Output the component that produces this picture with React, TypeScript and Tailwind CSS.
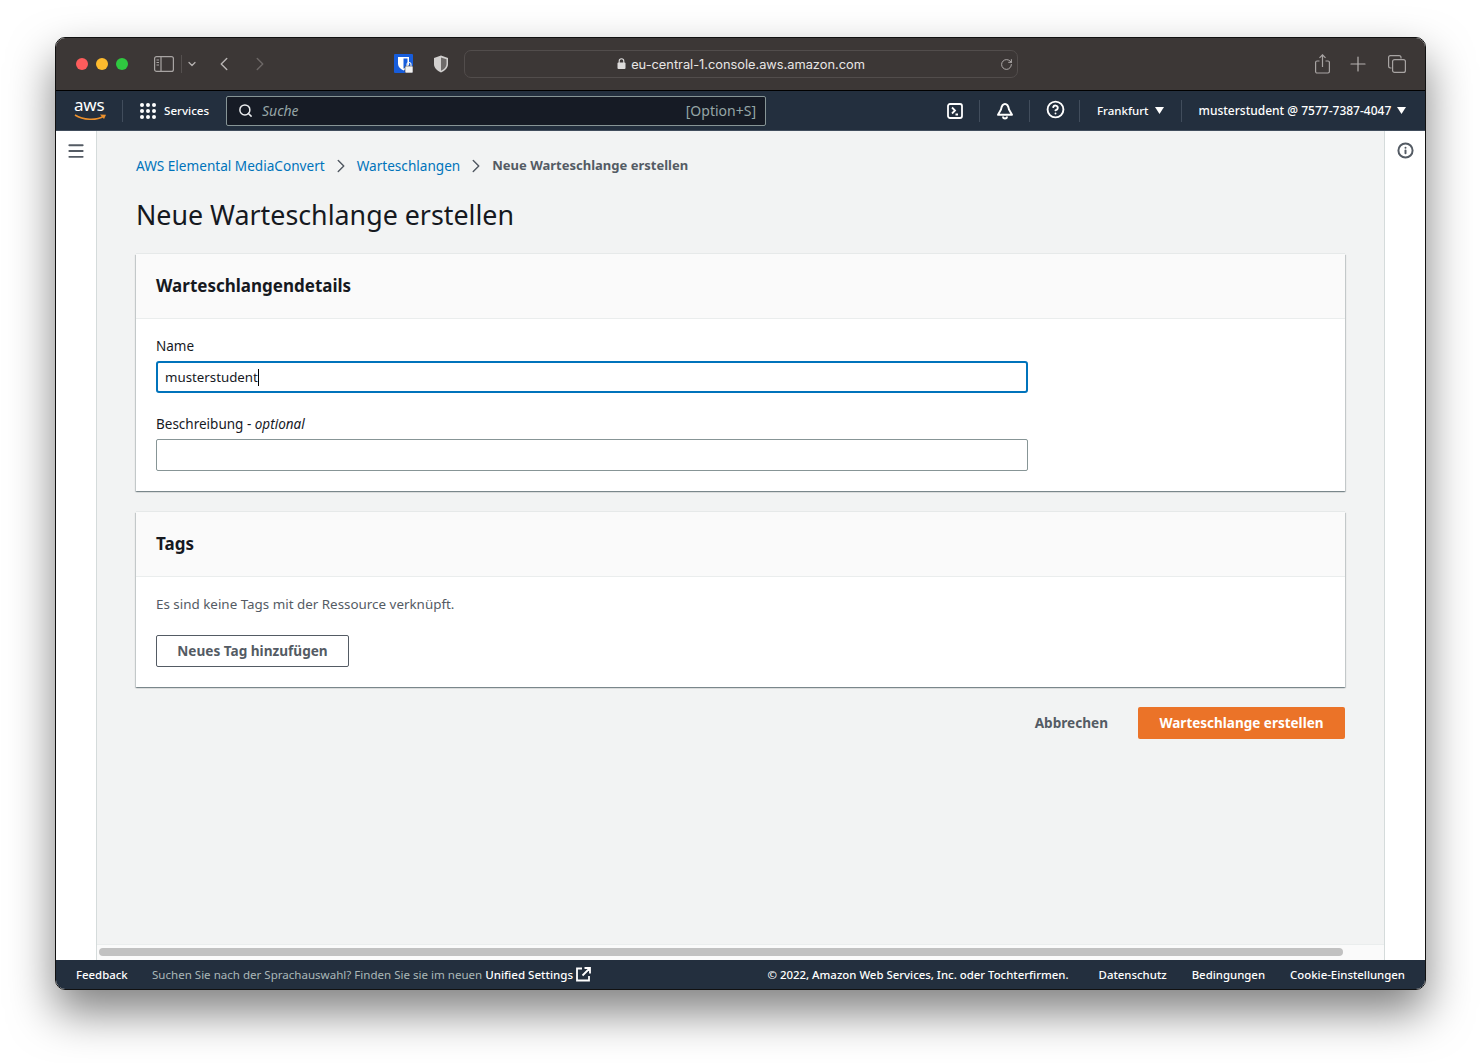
import { Menu, Plus, ChevronLeft, ChevronRight, ChevronDown, RotateCw, Search, HelpCircle, Info } from "lucide-react";

const font = "font-['Noto_Sans',sans-serif]";

function Caret() {
  return (
    <svg width="9" height="7" viewBox="0 0 9 7" className="ml-[6px]">
      <path d="M0 0h9L4.5 7z" fill="#fff" />
    </svg>
  );
}

function NavDivider() {
  return <div className="w-px h-[22px] bg-[#414d5c]" />;
}

function BrowserBar() {
  return (
    <div className="h-[53px] shrink-0 flex items-center bg-[#3c3736] border-b border-black text-[#b5b1b0] pb-px">
      <div className="flex gap-[8px] ml-[20px]">
        <div className="w-3 h-3 rounded-full bg-[#fd5c5c]" />
        <div className="w-3 h-3 rounded-full bg-[#febb2e]" />
        <div className="w-3 h-3 rounded-full bg-[#2fc840]" />
      </div>
      <svg width="20" height="16" viewBox="0 0 20 16" fill="none" stroke="#a8a4a3" strokeWidth="1.2" className="ml-[26px]">
        <rect x="0.6" y="0.6" width="18.8" height="14.8" rx="2" />
        <path d="M7 1v14M2.500 4h2.500M2.500 6.500h2.500M2.500 9h2.500" />
      </svg>
      <div className="w-px h-[18px] bg-[#55504f] ml-[7px]" />
      <ChevronDown size={12} strokeWidth={2.5} className="ml-[4px]" />
      <ChevronLeft size={22} strokeWidth={1.6} className="ml-[15px]" />
      <ChevronRight size={22} strokeWidth={1.6} className="ml-[14px] text-[#6b6665]" />
      <svg width="20" height="20" viewBox="0 0 20 20" className="ml-[123px]">
        <rect width="19" height="19" rx="1" fill="#175ddc" />
        <path d="M4 3h11v7c0 3-2.500 5-5.500 6.500C6.500 15 4 13 4 10z" fill="#fff" />
        <path d="M9.500 4.500h4v5.500c0 2-2 3.500-4 4.800z" fill="#175ddc" />
        <rect x="11" y="12" width="8" height="7" rx="1" fill="#f2f2f2" stroke="#3c3736" strokeWidth="0.6" />
        <path d="M13 12v-1.500a2 2 0 0 1 4 0V12" fill="none" stroke="#f2f2f2" strokeWidth="1.1" />
      </svg>
      <svg width="16" height="18" viewBox="0 0 16 18" className="ml-[19px]">
        <path d="M8 0.500 15 3v6c0 4-3 6.800-7 8.500C4 15.800 1 13 1 9V3z" fill="#d1cfce" />
        <path d="M8 2.500 13.500 4.300V9c0 3-2.300 5.300-5.500 6.700z" fill="#6e6a69" />
      </svg>
      <div className="relative ml-[15px] w-[554px] h-[28px] rounded-[7px] border border-[#524d4c] flex items-center justify-center">
        <svg width="9" height="11" viewBox="0 0 9 11" className="mr-[5px]">
          <rect x="0.5" y="4.500" width="8" height="6.500" rx="1" fill="#dedcdb" />
          <path d="M2.200 5V3a2.300 2.300 0 0 1 4.600 0v2" fill="none" stroke="#dedcdb" strokeWidth="1.1" />
        </svg>
        <span className="pt-[2px] text-[12.8px] text-[#e8e6e5] font-['Inter',sans-serif]">eu-central-1.console.aws.amazon.com</span>
        <RotateCw size={13} strokeWidth={1.5} className="absolute right-[4px] top-[7px] text-[#c5c2c1]" />
      </div>
      <svg width="15" height="20" viewBox="0 0 15 20" fill="none" stroke="#a8a4a3" strokeWidth="1.2" className="ml-[297px]">
        <path d="M4.500 7H2a1.400 1.400 0 0 0-1.400 1.400v9.200A1.400 1.400 0 0 0 2 19h11a1.400 1.400 0 0 0 1.400-1.400V8.400A1.400 1.400 0 0 0 13 7h-2.500" />
        <path d="M7.500 13V1M4.500 3.800 7.500 0.800l3 3" />
      </svg>
      <Plus size={24} strokeWidth={1.2} className="ml-[16px]" />
      <svg width="18" height="18" viewBox="0 0 18 18" fill="none" stroke="#a8a4a3" strokeWidth="1.2" className="ml-[18px]">
        <path d="M3.500 13H2.500A1.900 1.900 0 0 1 0.600 11.100V2.500A1.900 1.900 0 0 1 2.500 0.600h8.600A1.900 1.900 0 0 1 13 2.500v1" />
        <rect x="4.600" y="4.600" width="12.800" height="12.800" rx="2" />
      </svg>
    </div>
  );
}

function AwsNav() {
  return (
    <div className="h-[40px] shrink-0 flex items-center bg-[#232f3e] border-b border-[#414d5c] text-white text-[12px] font-medium">
      <div className="relative w-[32px] h-[24px] ml-[18px]">
        <span className="absolute left-0 top-[-4px] text-[17px] leading-[20px] tracking-[-0.2px] font-normal">aws</span>
        <svg width="33" height="8" viewBox="0 0 33 8" className="absolute left-0 top-[15px]">
          <path d="M1 1c8 5 21 6 29 1" fill="none" stroke="#ec912d" strokeWidth="1.6" />
          <path d="M26 0.500 32 0.800 30 5z" fill="#ec912d" />
        </svg>
      </div>
      <div className="ml-[16px]"><NavDivider /></div>
      <svg width="16" height="16" viewBox="0 0 16 16" fill="#fff" className="ml-[17px]">
        {[2, 8, 14].flatMap((y) => [2, 8, 14].map((x) => <circle key={`${x}-${y}`} cx={x} cy={y} r="2" />))}
      </svg>
      <span className="ml-[8px] w-[62px] text-[11.6px]">Services</span>
      <div className="w-[540px] h-[30px] rounded-[2px] bg-[#161b25] border border-[#879596] flex items-center">
        <Search size={15} strokeWidth={2.4} className="ml-[11px] text-[#e9ebed]" />
        <span className="ml-[9px] italic text-[14px] font-normal text-[#95a5a6]">Suche</span>
        <span className="ml-auto mr-[9px] text-[14px] font-normal text-[#95a5a6]">[Option+S]</span>
      </div>
      <svg width="16" height="16" viewBox="0 0 16 16" fill="none" stroke="#fff" strokeWidth="1.8" className="ml-[181px]">
        <rect x="1" y="1" width="14" height="14" rx="2" />
        <path d="M5 4.500 8 7.500 5 10.500M8.500 11.500h2.500" />
      </svg>
      <div className="ml-[16px]"><NavDivider /></div>
      <svg width="18" height="18" viewBox="0 0 18 18" fill="none" stroke="#fff" strokeWidth="1.9" className="ml-[16px]">
        <path d="M9 2C6.500 2 5.500 4.500 5 7.500L2 12.800h14L13 7.500C12.500 4.500 11.500 2 9 2z" strokeLinejoin="round" />
        <path d="M7 14.500a2 2 0 0 0 4 0" />
      </svg>
      <div className="ml-[15px]"><NavDivider /></div>
      <HelpCircle size={19} strokeWidth={2.4} className="ml-[16px] -translate-y-px" />
      <div className="ml-[14px]"><NavDivider /></div>
      <span className="ml-[17px] text-[11.5px]">Frankfurt</span>
      <Caret />
      <div className="ml-[17px]"><NavDivider /></div>
      <span className="ml-[17px]">musterstudent @ 7577-7387-4047</span>
      <Caret />
    </div>
  );
}

function Crumb() {
  return <ChevronRight size={22} strokeWidth={1.6} className="mx-[5px] text-[#545b64]" />;
}

function CardHeader({ title }: { title: string }) {
  return (
    <div className="h-[65px] shrink-0 flex items-center px-5 bg-[#fafafa] border-b border-[#eaeded]">
      <h2 className="text-[17px] font-bold text-[#16191f]">{title}</h2>
    </div>
  );
}

function Card({ title, children }: { title: string; children: React.ReactNode }) {
  return (
    <section className="bg-white shadow-[0_1px_1px_0_rgba(0,28,36,0.3),1px_1px_1px_0_rgba(0,28,36,0.15),-1px_1px_1px_0_rgba(0,28,36,0.15),0_-1px_0_0_#e6e9e9]">
      <CardHeader title={title} />
      {children}
    </section>
  );
}

function Content() {
  return (
    <main className="flex-1 flex flex-col bg-[#f2f3f3] min-w-0">
      <div className="flex-1 px-[39px] pt-[24px]">
        <nav className="h-[22px] flex items-center text-[13.6px]">
          <span className="text-[#0073bb]">AWS Elemental MediaConvert</span>
          <Crumb />
          <span className="text-[#0073bb]">Warteschlangen</span>
          <Crumb />
          <span className="text-[#545b64] font-bold text-[13px]">Neue Warteschlange erstellen</span>
        </nav>
        <h1 className="mt-[20px] text-[26.8px] leading-[36px] text-[#16191f]">Neue Warteschlange erstellen</h1>
        <div className="mt-[21px]">
          <Card title="Warteschlangendetails">
            <div className="px-5 pt-[17px] pb-5">
              <label className="block text-[13.5px] leading-[20px] text-[#16191f]">Name</label>
              <div className="mt-[5px] w-[872px] h-[32px] rounded-[3px] border-2 border-[#0073bb] flex items-center pl-[7px] pt-px text-[13.3px] text-[#16191f]">
                musterstudent<span className="w-px h-[17px] bg-black" />
              </div>
              <label className="block mt-[21px] text-[13.5px] leading-[20px] text-[#16191f]">
                Beschreibung - <em>optional</em>
              </label>
              <div className="mt-[5px] w-[872px] h-[32px] rounded-[2px] border border-[#879596] bg-white" />
            </div>
          </Card>
        </div>
        <div className="mt-[21px]">
          <Card title="Tags">
            <div className="px-5 pt-[17px] pb-5">
              <p className="text-[13.4px] leading-[20px] text-[#545b64]">Es sind keine Tags mit der Ressource verknüpft.</p>
              <button className="mt-[21px] h-[32px] w-[193px] rounded-[2px] border border-[#545b64] bg-white text-[13.6px] font-bold text-[#545b64]">
                Neues Tag hinzufügen
              </button>
            </div>
          </Card>
        </div>
        <div className="mt-[20px] flex items-center justify-end">
          <button className="text-[13.6px] font-bold text-[#545b64] mr-[30px]">Abbrechen</button>
          <button className="h-[32px] w-[207px] rounded-[2px] bg-[#eb7328] text-white text-[13.5px] font-bold">Warteschlange erstellen</button>
        </div>
      </div>
      <div className="h-[16px] shrink-0 bg-[#fafafa] border-t border-[#eaeded] pl-[2px] pr-[41px] pt-[3px]">
        <div className="h-[8px] rounded-full bg-[#c1c1c1]" />
      </div>
    </main>
  );
}

function Footer() {
  return (
    <div className="h-[29px] shrink-0 flex items-center bg-[#232f3e] text-white text-[11.4px] font-medium pl-[20px] pr-[20px]">
      <span className="w-[51px] whitespace-nowrap">Feedback</span>
      <span className="ml-[25px] text-[#aab7b8] font-normal text-[11.55px]">Suchen Sie nach der Sprachauswahl? Finden Sie sie im neuen</span>
      <span className="ml-[3px] text-[11.55px]">Unified Settings</span>
      <svg width="15" height="15" viewBox="0 0 15 15" fill="none" stroke="#fff" strokeWidth="1.8" className="ml-[3px]">
        <path d="M6 1.500H1v12h12V9M8.500 1h5.500v5.500M14 1 6.500 8.500" />
      </svg>
      <span className="ml-auto">© 2022, Amazon Web Services, Inc. oder Tochterfirmen.</span>
      <span className="ml-[30px]">Datenschutz</span>
      <span className="ml-[25px]">Bedingungen</span>
      <span className="ml-[25px]">Cookie-Einstellungen</span>
    </div>
  );
}

export default function App() {
  return (
    <div className={`w-[1481px] h-[1063px] bg-white pl-[55px] pt-[37px] overflow-hidden ${font}`}>
      <div className="w-[1371px] h-[953px] flex flex-col rounded-[10px] overflow-hidden border border-[#111] shadow-[0_22px_45px_rgba(0,0,0,0.5)]">
        <BrowserBar />
        <AwsNav />
        <div className="flex-1 flex min-h-0">
          <aside className="w-[41px] shrink-0 bg-white border-r border-[#d5dbdb] flex justify-center pt-[10px]">
            <Menu size={20} strokeWidth={2.3} className="text-[#545b64]" />
          </aside>
          <Content />
          <aside className="w-[41px] shrink-0 bg-white border-l border-[#d5dbdb] flex justify-center pt-[11px]">
            <Info size={17} strokeWidth={2.8} className="text-[#545b64]" />
          </aside>
        </div>
        <Footer />
      </div>
    </div>
  );
}
